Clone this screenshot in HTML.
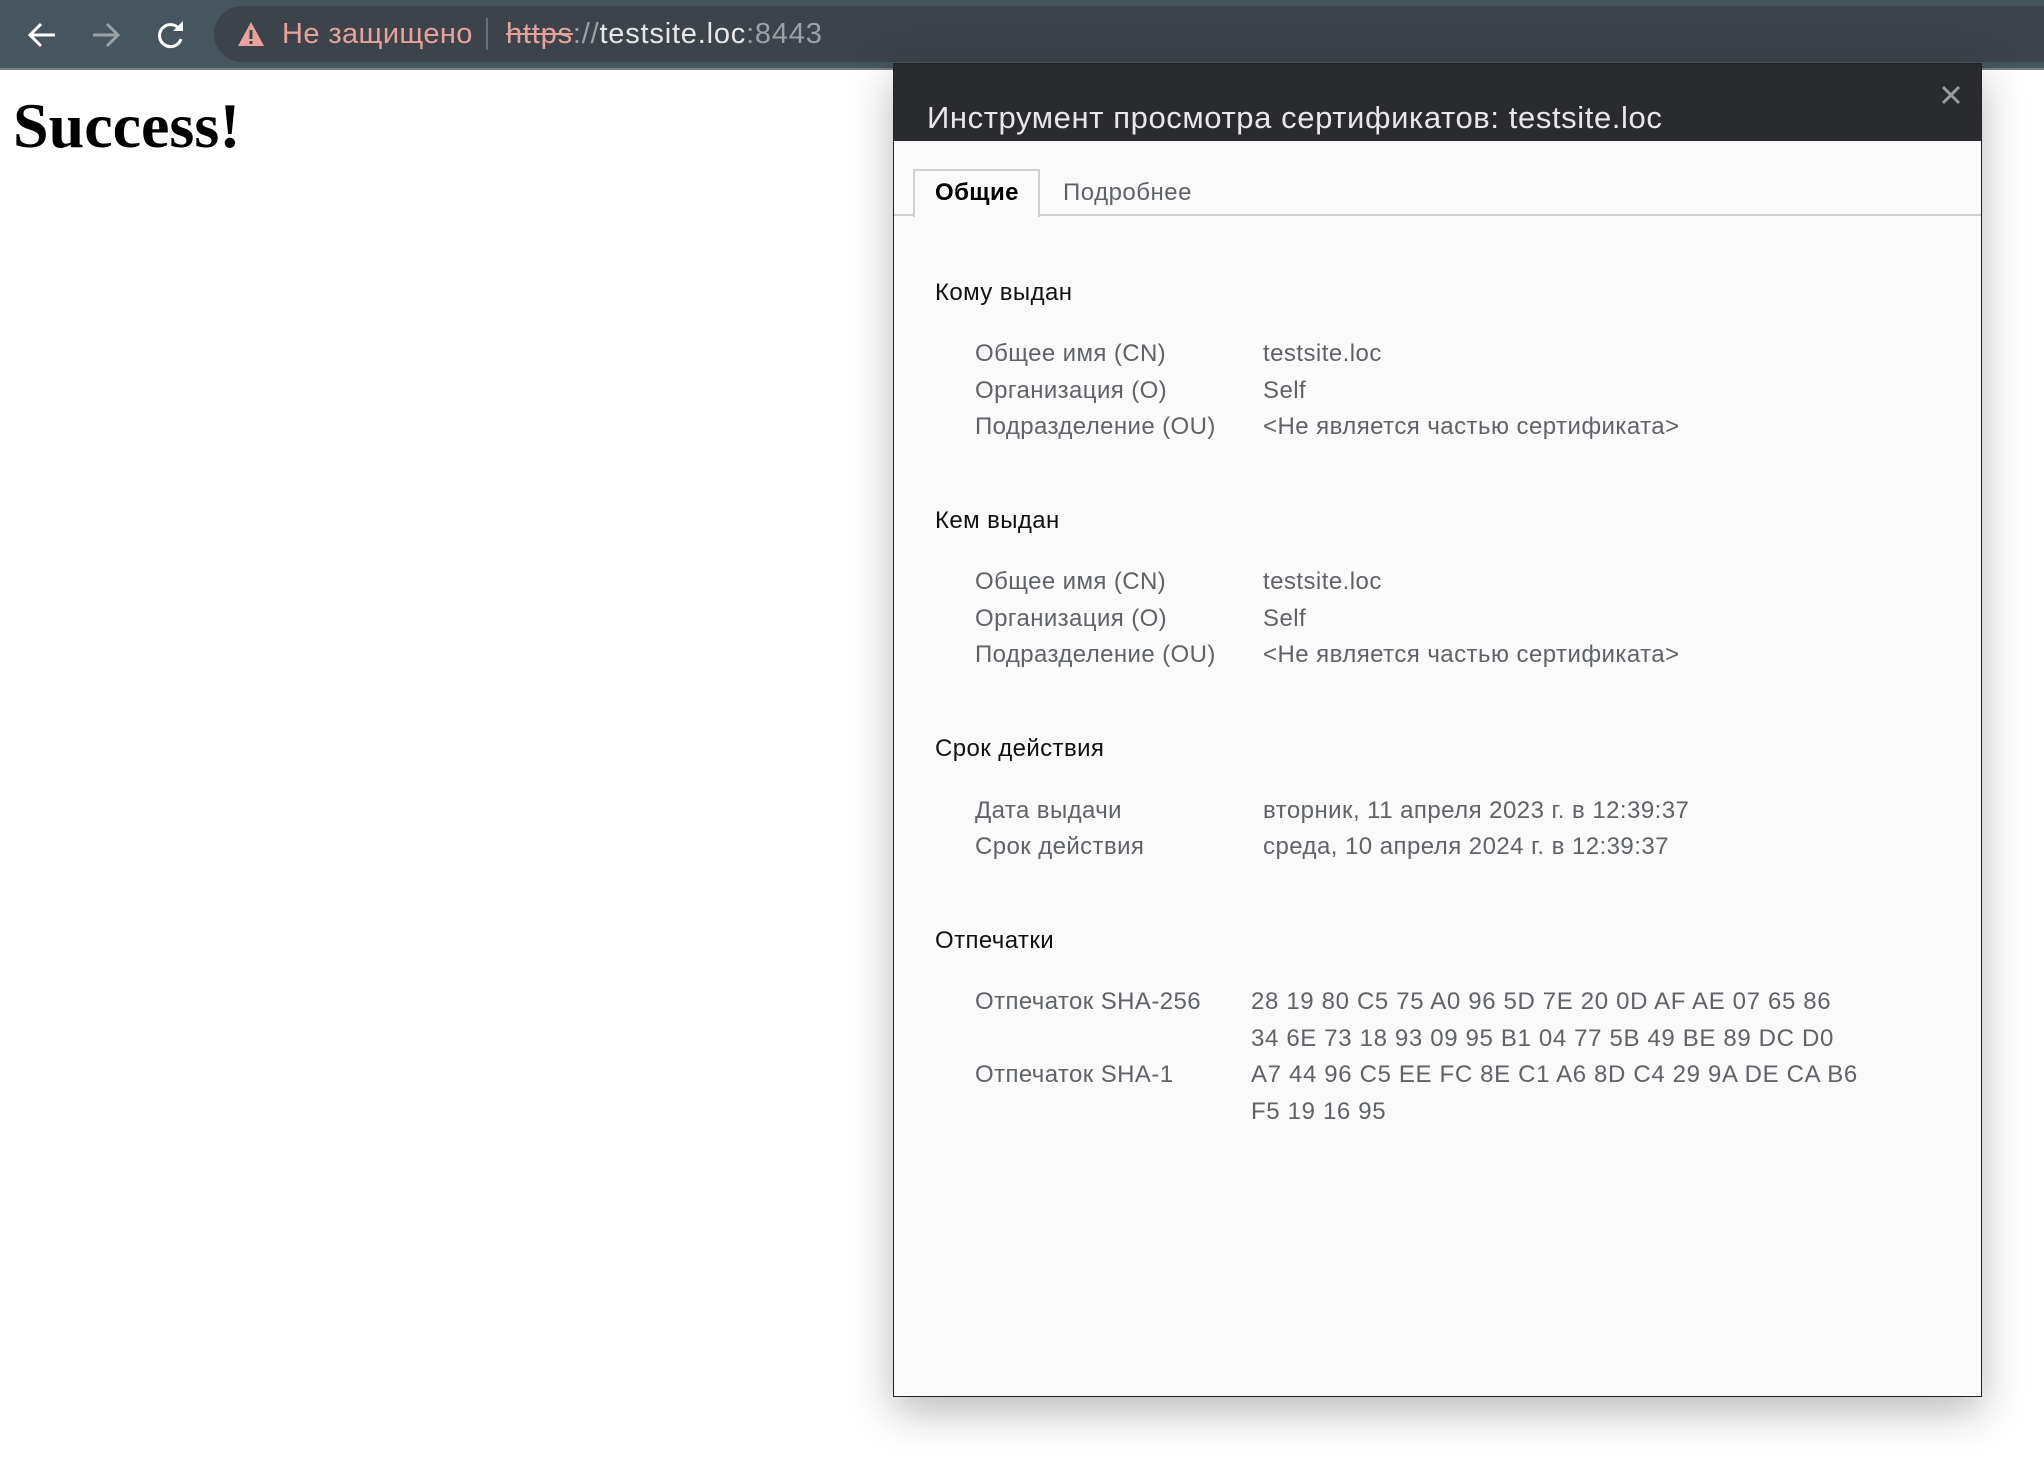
<!DOCTYPE html>
<html><head><meta charset="utf-8"><style>
html,body{margin:0;padding:0;width:2044px;height:1460px;overflow:hidden;background:#fff;position:relative;font-family:"Liberation Sans","DejaVu Sans",sans-serif}
.t{position:absolute;white-space:nowrap;line-height:36px}
#bar{position:absolute;left:0;top:0;width:2044px;height:70px;background:#47555f;border-bottom:2px solid #7a8287;box-sizing:border-box}
#omni{position:absolute;left:214px;top:6px;width:1900px;height:56px;border-radius:28px;background:#3c434b}
#dlg{position:absolute;left:893px;top:63px;width:1089px;height:1334px;background:#fafafa;border:1px solid #222;box-sizing:border-box;box-shadow:0 14px 40px rgba(0,0,0,.28)}
#hd{position:absolute;left:0;top:0;right:0;height:77px;background:#2a2b2f}
.h{color:#111;font-size:24px;letter-spacing:0.4px}
.l{color:#5f6368;font-size:24px;letter-spacing:0.4px}
.v{color:#5f6368;font-size:24px;letter-spacing:0.45px}
</style></head><body>
<div id="bar"><div id="omni"></div>
<svg style="position:absolute;left:26px;top:20px" width="32" height="30" viewBox="0 0 32 30"><path d="M29 15H5M15 4L4 15l11 11" stroke="#fff" stroke-width="3" fill="none"/></svg>
<svg style="position:absolute;left:90px;top:20px" width="32" height="30" viewBox="0 0 32 30"><path d="M3 15h24M17 4l11 11-11 11" stroke="#9aa1a7" stroke-width="3" fill="none"/></svg>
<svg style="position:absolute;left:155px;top:19px" width="32" height="32" viewBox="0 0 32 32"><path d="M25 11A11 11 0 1 0 26 20" stroke="#fff" stroke-width="3" fill="none"/><path d="M18 12h10V2z" fill="#fff"/></svg>
<svg style="position:absolute;left:237px;top:21px" width="28" height="26" viewBox="0 0 28 26"><path d="M14 1L27 25H1z" fill="#e8a29c"/><rect x="12.5" y="9" width="3" height="9" fill="#3c434b"/><rect x="12.5" y="20" width="3" height="3" fill="#3c434b"/></svg>
<div class="t" style="left:282px;top:16px;font-size:29px;color:#e8a29c;letter-spacing:0.4px">Не защищено</div>
<div style="position:absolute;left:486px;top:18px;width:2px;height:32px;background:#6a7177"></div>
<div class="t" style="left:506px;top:16px;font-size:29px;color:#e8e8e8;letter-spacing:0.8px"><span style="color:#e8a29c;text-decoration:line-through">https</span><span style="color:#9aa1a7">://</span>testsite.loc<span style="color:#9aa1a7">:8443</span></div>
</div>
<div class="t" style="left:13px;top:88px;font-family:'Liberation Serif',serif;font-weight:bold;font-size:64px;line-height:76px;letter-spacing:0px">Success!</div>
<div id="dlg">
<div id="hd"></div>
<div class="t" style="left:33px;top:18px;font-size:31px;line-height:72px;color:#e8e8ea;letter-spacing:0.6px">Инструмент просмотра сертификатов: testsite.loc</div>
<svg style="position:absolute;left:1047px;top:21px" width="20" height="20" viewBox="0 0 20 20"><path d="M2 2l16 16M18 2L2 18" stroke="#9a9ca0" stroke-width="3"/></svg>
<div style="position:absolute;left:0;right:0;top:150px;height:2px;background:#cfcfcf"></div>
<div style="position:absolute;left:19px;top:105px;width:127px;height:48px;border:2px solid #cfcfcf;border-bottom:none;background:#fafafa;box-sizing:border-box"></div>
<div class="t" style="left:41px;top:111px;font-size:24px;font-weight:bold;color:#000;letter-spacing:0.4px">Общие</div>
<div class="t" style="left:169px;top:111px;font-size:24px;color:#5f6368;letter-spacing:0.5px">Подробнее</div>
<div class="t h" style="left:41px;top:211px">Кому выдан</div>
<div class="t l" style="left:81px;top:272px">Общее имя (CN)</div><div class="t v" style="left:369px;top:272px">testsite.loc</div>
<div class="t l" style="left:81px;top:309px">Организация (O)</div><div class="t v" style="left:369px;top:309px">Self</div>
<div class="t l" style="left:81px;top:345px">Подразделение (OU)</div><div class="t v" style="left:369px;top:345px">&lt;Не является частью сертификата&gt;</div>
<div class="t h" style="left:41px;top:439px">Кем выдан</div>
<div class="t l" style="left:81px;top:500px">Общее имя (CN)</div><div class="t v" style="left:369px;top:500px">testsite.loc</div>
<div class="t l" style="left:81px;top:537px">Организация (O)</div><div class="t v" style="left:369px;top:537px">Self</div>
<div class="t l" style="left:81px;top:573px">Подразделение (OU)</div><div class="t v" style="left:369px;top:573px">&lt;Не является частью сертификата&gt;</div>
<div class="t h" style="left:41px;top:667px">Срок действия</div>
<div class="t l" style="left:81px;top:729px">Дата выдачи</div><div class="t v" style="left:369px;top:729px">вторник, 11 апреля 2023 г. в 12:39:37</div>
<div class="t l" style="left:81px;top:765px">Срок действия</div><div class="t v" style="left:369px;top:765px">среда, 10 апреля 2024 г. в 12:39:37</div>
<div class="t h" style="left:41px;top:859px">Отпечатки</div>
<div class="t l" style="left:81px;top:920px">Отпечаток SHA-256</div><div class="t v" style="left:357px;top:920px;letter-spacing:0.65px">28 19 80 C5 75 A0 96 5D 7E 20 0D AF AE 07 65 86</div>
<div class="t v" style="left:357px;top:957px;letter-spacing:0.65px">34 6E 73 18 93 09 95 B1 04 77 5B 49 BE 89 DC D0</div>
<div class="t l" style="left:81px;top:993px">Отпечаток SHA-1</div><div class="t v" style="left:357px;top:993px;letter-spacing:0.65px">A7 44 96 C5 EE FC 8E C1 A6 8D C4 29 9A DE CA B6</div>
<div class="t v" style="left:357px;top:1030px;letter-spacing:0.65px">F5 19 16 95</div>
</div>
</body></html>
